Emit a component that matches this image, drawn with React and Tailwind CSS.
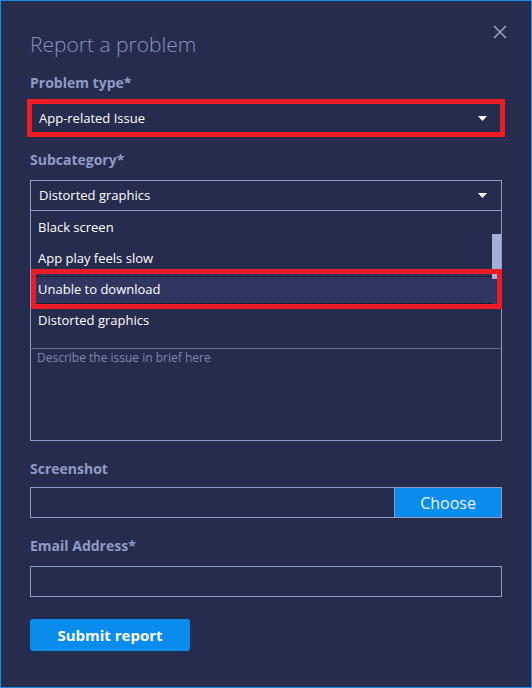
// Report a problem — feedback dialog
const items = ["Black screen", "App play feels slow", "Unable to download", "Distorted graphics"];

function Caret() {
  return (
    <svg width="9" height="5" viewBox="0 0 9 5" className="shrink-0">
      <path d="M0 0H9L4.5 5Z" fill="#ffffff" />
    </svg>
  );
}

function Label({ children, className = "" }) {
  return (
    <p className={`text-[14px] leading-[20px] font-bold text-[#8f9bc6] ${className}`}>{children}</p>
  );
}

export default function App() {
  return (
    <div className="w-[532px] h-[688px] border border-[#1a8ae6] bg-[#262c4d] px-[29px] font-['Open_Sans','Noto_Sans',sans-serif]">
      <div className="flex items-start justify-between">
        <h1 className="mt-[29px] text-[21px] leading-[28px] font-light text-[#8793c0]">Report a problem</h1>
        <button className="mt-[24px] -mr-[5px] w-[14px] h-[14px]">
          <svg width="14" height="14" viewBox="0 0 14 14">
            <path d="M1 1L13 13M13 1L1 13" stroke="#9da2b8" strokeWidth="1.6" />
          </svg>
        </button>
      </div>

      <Label className="mt-[15px]">Problem type*</Label>
      <div className="relative mt-[9px] h-[32px] border border-[#8f9cc8] flex items-center justify-between pl-[8px] pr-[14px]">
        <span className="pt-[2px] text-[13px] text-white">App-related Issue</span>
        <Caret />
        <div className="absolute -inset-[4px] border-[5px] border-[#ed1c24]" />
      </div>

      <Label className="mt-[16px]">Subcategory*</Label>
      <div className="mt-[10px] h-[31px] border border-[#8f9cc8] flex items-center justify-between pl-[8px] pr-[14px]">
        <span className="pt-[1px] text-[13px] text-white">Distorted graphics</span>
        <Caret />
      </div>
      <div className="relative h-[137px] border-x border-[#8f9cc8] pt-[1px]">
        {items.map((it, i) => (
          <div
            key={it}
            className={`relative h-[31px] flex items-center pl-[7px] pt-[1px] text-[13px] text-white ${i === 2 ? "bg-[#30365f]" : ""}`}
          >
            {it}
            {i === 2 && (
              <span className="absolute left-[5px] right-[10px] top-[2px] bottom-[1px] border-y border-dotted border-black" />
            )}
          </div>
        ))}
        <div className="absolute right-0 top-[23px] w-[9px] h-[45px] bg-[#a3afd9]" />
        <div className="absolute left-0 -right-[1px] top-[58px] h-[40px] border-[5px] border-[#ed1c24]" />
      </div>
      <div className="h-[93px] border border-[#8f9cc8] border-t-[#5f6990] pl-[6px] pt-[1px]">
        <p className="text-[12px] leading-[16px] text-[#7e88ad]">Describe the issue in brief here</p>
      </div>

      <Label className="mt-[18px]">Screenshot</Label>
      <div className="mt-[8px] h-[31px] border border-[#8f9cc8] flex">
        <div className="flex-1" />
        <button className="w-[107px] border-l border-[#8f9cc8] bg-[#0a8cec] pt-[1px] text-[16px] text-[#eef4ff]">Choose</button>
      </div>

      <Label className="mt-[18px]">Email Address*</Label>
      <div className="mt-[10px] h-[31px] border border-[#8f9cc8]" />

      <button className="mt-[22px] w-[160px] h-[32px] rounded-[3px] bg-[#0a8cec] pt-[1px] text-[15px] font-bold text-white">
        Submit report
      </button>
    </div>
  );
}
